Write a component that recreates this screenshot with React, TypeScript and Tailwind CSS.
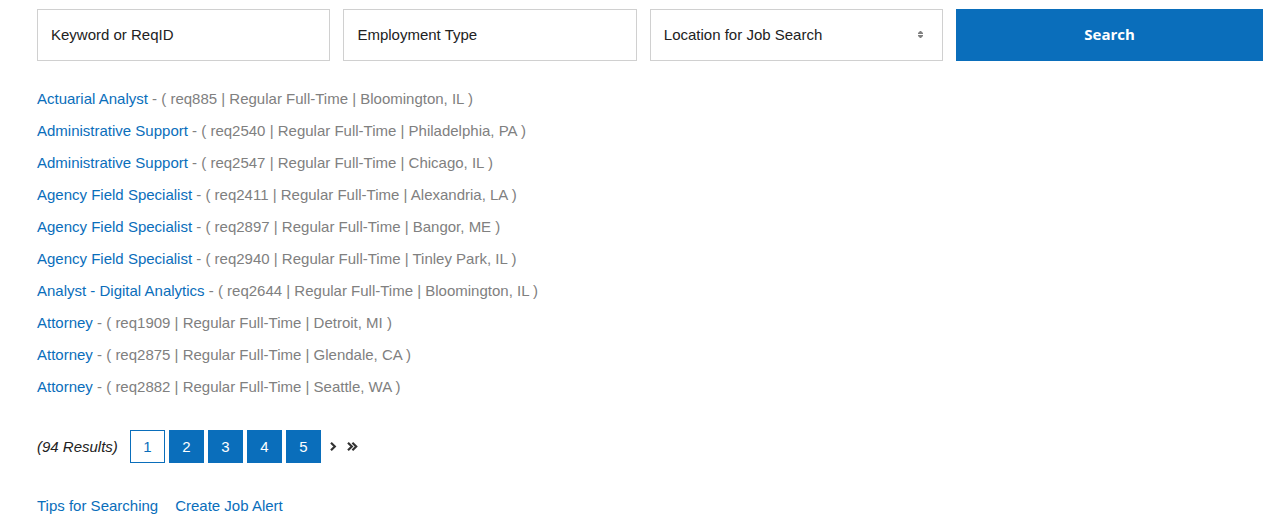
type Job = { title: string; req: string; place: string };

const jobs: Job[] = [
  { title: "Actuarial Analyst", req: "req885", place: "Bloomington, IL" },
  { title: "Administrative Support", req: "req2540", place: "Philadelphia, PA" },
  { title: "Administrative Support", req: "req2547", place: "Chicago, IL" },
  { title: "Agency Field Specialist", req: "req2411", place: "Alexandria, LA" },
  { title: "Agency Field Specialist", req: "req2897", place: "Bangor, ME" },
  { title: "Agency Field Specialist", req: "req2940", place: "Tinley Park, IL" },
  { title: "Analyst - Digital Analytics", req: "req2644", place: "Bloomington, IL" },
  { title: "Attorney", req: "req1909", place: "Detroit, MI" },
  { title: "Attorney", req: "req2875", place: "Glendale, CA" },
  { title: "Attorney", req: "req2882", place: "Seattle, WA" },
];

const field =
  "h-[52px] w-full min-w-0 appearance-none rounded-none border border-[#d0d0d0] bg-white px-[13px] text-[#222] placeholder:text-[#222] placeholder:opacity-100";

function SearchForm() {
  return (
    <form
      className="grid grid-cols-[22fr_22fr_22fr_23fr] gap-[13px]"
      onSubmit={(e) => e.preventDefault()}
    >
      <input className={`${field} pb-[2px]`} type="text" aria-label="Keyword or ReqID" placeholder="Keyword or ReqID" />
      <input className={`${field} pb-[2px]`} type="text" aria-label="Employment Type" placeholder="Employment Type" />
      <div className="relative">
        <select className={field} aria-label="Location for Job Search">
          <option>Location for Job Search</option>
        </select>
        <svg
          className="pointer-events-none absolute top-[22px] right-5 h-[7px] w-[5px]"
          viewBox="0 0 5 7"
          fill="#808080"
          aria-hidden="true"
        >
          <path d="M2 0h1l2 2v1H0V2zM0 4h5v1L3 7H2L0 5z" />
        </svg>
      </div>
      <button
        type="submit"
        className="h-[52px] bg-[#0a6ebb] pb-[2px] font-['Open_Sans',sans-serif] font-bold text-white"
      >
        Search
      </button>
    </form>
  );
}

function Pagination() {
  return (
    <nav className="mt-[27px] flex h-[33px] items-center" aria-label="Results pages">
      <em className="mr-3">(94 Results)</em>
      <div className="flex gap-1">
        {[1, 2, 3, 4, 5].map((n) => (
          <a
            key={n}
            href={`#page-${n}`}
            aria-current={n === 1 ? "page" : undefined}
            className={
              n === 1
                ? "flex h-[33px] w-[35px] items-center justify-center border border-[#0a6ebb] text-[#0a6ebb]"
                : "flex h-[33px] w-[35px] items-center justify-center bg-[#0a6ebb] text-white"
            }
          >
            {n}
          </a>
        ))}
      </div>
      <a href="#next" aria-label="Next page" className="ml-[9px]">
        <svg className="h-[9px] w-[7px]" viewBox="0 0 7 9" fill="none" stroke="#333" strokeWidth="2.2" aria-hidden="true">
          <path d="M1 .8l3.8 3.7L1 8.2" />
        </svg>
      </a>
      <a href="#last" aria-label="Last page" className="ml-[10px]">
        <svg className="h-[9px] w-[11px]" viewBox="0 0 11 9" fill="none" stroke="#333" strokeWidth="2.2" aria-hidden="true">
          <path d="M1 .8l3.8 3.7L1 8.2M5.4 .8l3.8 3.7-3.8 3.7" />
        </svg>
      </a>
    </nav>
  );
}

export default function App() {
  return (
    <main className="bg-white pt-[9px] pr-6 pb-3 pl-[37px] font-['Liberation_Sans',Arial,sans-serif] text-[15px] leading-6 text-[#222]">
      <SearchForm />
      <ul className="mt-[22px] text-[#808080]">
        {jobs.map((job) => (
          <li key={job.req} className="leading-8">
            <a href={`#${job.req}`} className="text-[#0a6ebb]">
              {job.title}
            </a>{" "}
            - ( {job.req} | Regular Full-Time | {job.place} )
          </li>
        ))}
      </ul>
      <Pagination />
      <div className="mt-[31px] flex gap-[17px] text-[#0a6ebb]">
        <a href="#tips">Tips for Searching</a>
        <a href="#alert">Create Job Alert</a>
      </div>
    </main>
  );
}
